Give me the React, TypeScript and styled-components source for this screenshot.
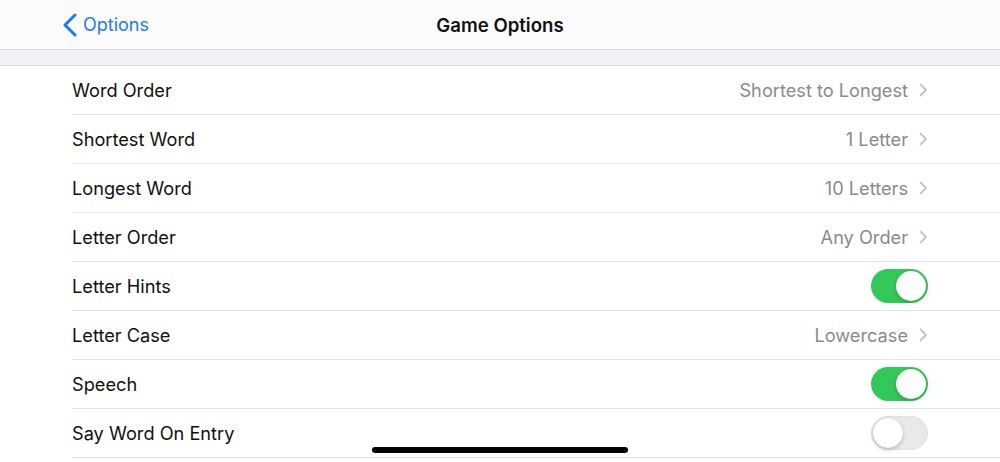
import React, { useState } from 'react';
import styled, { createGlobalStyle } from 'styled-components';

const GlobalStyle = createGlobalStyle`
  html, body {
    margin: 0;
    padding: 0;
    background: #ffffff;
    font-family: Inter, "Liberation Sans", sans-serif;
    -webkit-font-smoothing: antialiased;
  }
`;

const Page = styled.div`
  width: 1000px;
  height: 462px;
  overflow: hidden;
  position: relative;
  background: #ffffff;
`;

const NavBar = styled.div`
  height: 49px;
  display: grid;
  grid-template-columns: 1fr auto 1fr;
  align-items: center;
  background: #fbfbfb;
  border-bottom: 1px solid #d6d6da;
`;

const BackButton = styled.div`
  display: flex;
  align-items: center;
  gap: 6px;
  padding-left: 63px;
  color: #1a7cf5;
  font-size: 18px;
  cursor: pointer;
`;

const Title = styled.div`
  font-size: 18.6px;
  font-weight: 600;
  color: #111;
`;

const Band = styled.div`
  height: 15px;
  background: #f0f0f5;
  border-bottom: 1px solid #dcdce0;
`;

const List = styled.div`
  display: flex;
  flex-direction: column;
`;

const Row = styled.div`
  height: 48px;
  margin-left: 72px;
  padding-right: 72px;
  display: flex;
  align-items: center;
  justify-content: space-between;
  border-bottom: 1px solid #e4e4e6;
`;

const Label = styled.span`
  font-size: 18.2px;
  color: #111;
`;

const Detail = styled.div`
  display: flex;
  align-items: center;
  gap: 11px;
  color: #8a8a8f;
  font-size: 18.2px;
  margin-right: 1px;
`;

const Switch = styled.div<{ $on: boolean }>`
  width: 57px;
  height: 34px;
  border-radius: 17px;
  box-sizing: border-box;
  position: relative;
  background: ${p => (p.$on ? '#34c759' : '#e9e9eb')};
  border: ${p => (p.$on ? 'none' : '1px solid #e2e2e4')};
  cursor: pointer;
  &::after {
    content: '';
    position: absolute;
    top: ${p => (p.$on ? '2px' : '1px')};
    left: ${p => (p.$on ? '25px' : '1px')};
    width: 30px;
    height: 30px;
    border-radius: 50%;
    background: #fff;
    box-shadow: 0 2px 4px rgba(0, 0, 0, 0.18), 0 0 1px rgba(0, 0, 0, 0.2);
  }
`;

const HomeBar = styled.div`
  position: absolute;
  left: 372px;
  bottom: 9px;
  width: 256px;
  height: 6px;
  border-radius: 3px;
  background: #000;
`;

const Chevron = () => (
  <svg width="8" height="14" viewBox="0 0 8 14">
    <path d="M1.5 1.5l5.5 5.5-5.5 5.5" fill="none" stroke="#c4c4c7" strokeWidth="1.8" strokeLinecap="round" strokeLinejoin="round" />
  </svg>
);

type Item =
  | { label: string; value: string }
  | { label: string; toggle: boolean };

const items: Item[] = [
  { label: 'Word Order', value: 'Shortest to Longest' },
  { label: 'Shortest Word', value: '1 Letter' },
  { label: 'Longest Word', value: '10 Letters' },
  { label: 'Letter Order', value: 'Any Order' },
  { label: 'Letter Hints', toggle: true },
  { label: 'Letter Case', value: 'Lowercase' },
  { label: 'Speech', toggle: true },
  { label: 'Say Word On Entry', toggle: false },
];

const App = () => {
  const [toggles, setToggles] = useState<Record<string, boolean>>(() => {
    const t: Record<string, boolean> = {};
    items.forEach(i => {
      if ('toggle' in i) t[i.label] = i.toggle;
    });
    return t;
  });

  return (
    <Page>
      <GlobalStyle />
      <NavBar>
        <BackButton>
          <svg width="14" height="24" viewBox="0 0 14 24">
            <path d="M12 2L2 12l10 10" fill="none" stroke="#1a7cf5" strokeWidth="3" strokeLinecap="round" strokeLinejoin="round" />
          </svg>
          Options
        </BackButton>
        <Title>Game Options</Title>
        <div />
      </NavBar>
      <Band />
      <List>
        {items.map(item => (
          <Row key={item.label}>
            <Label>{item.label}</Label>
            {'value' in item ? (
              <Detail>
                {item.value}
                <Chevron />
              </Detail>
            ) : (
              <Switch
                $on={toggles[item.label]}
                onClick={() => setToggles(t => ({ ...t, [item.label]: !t[item.label] }))}
              />
            )}
          </Row>
        ))}
      </List>
      <HomeBar />
    </Page>
  );
};

export default App;
